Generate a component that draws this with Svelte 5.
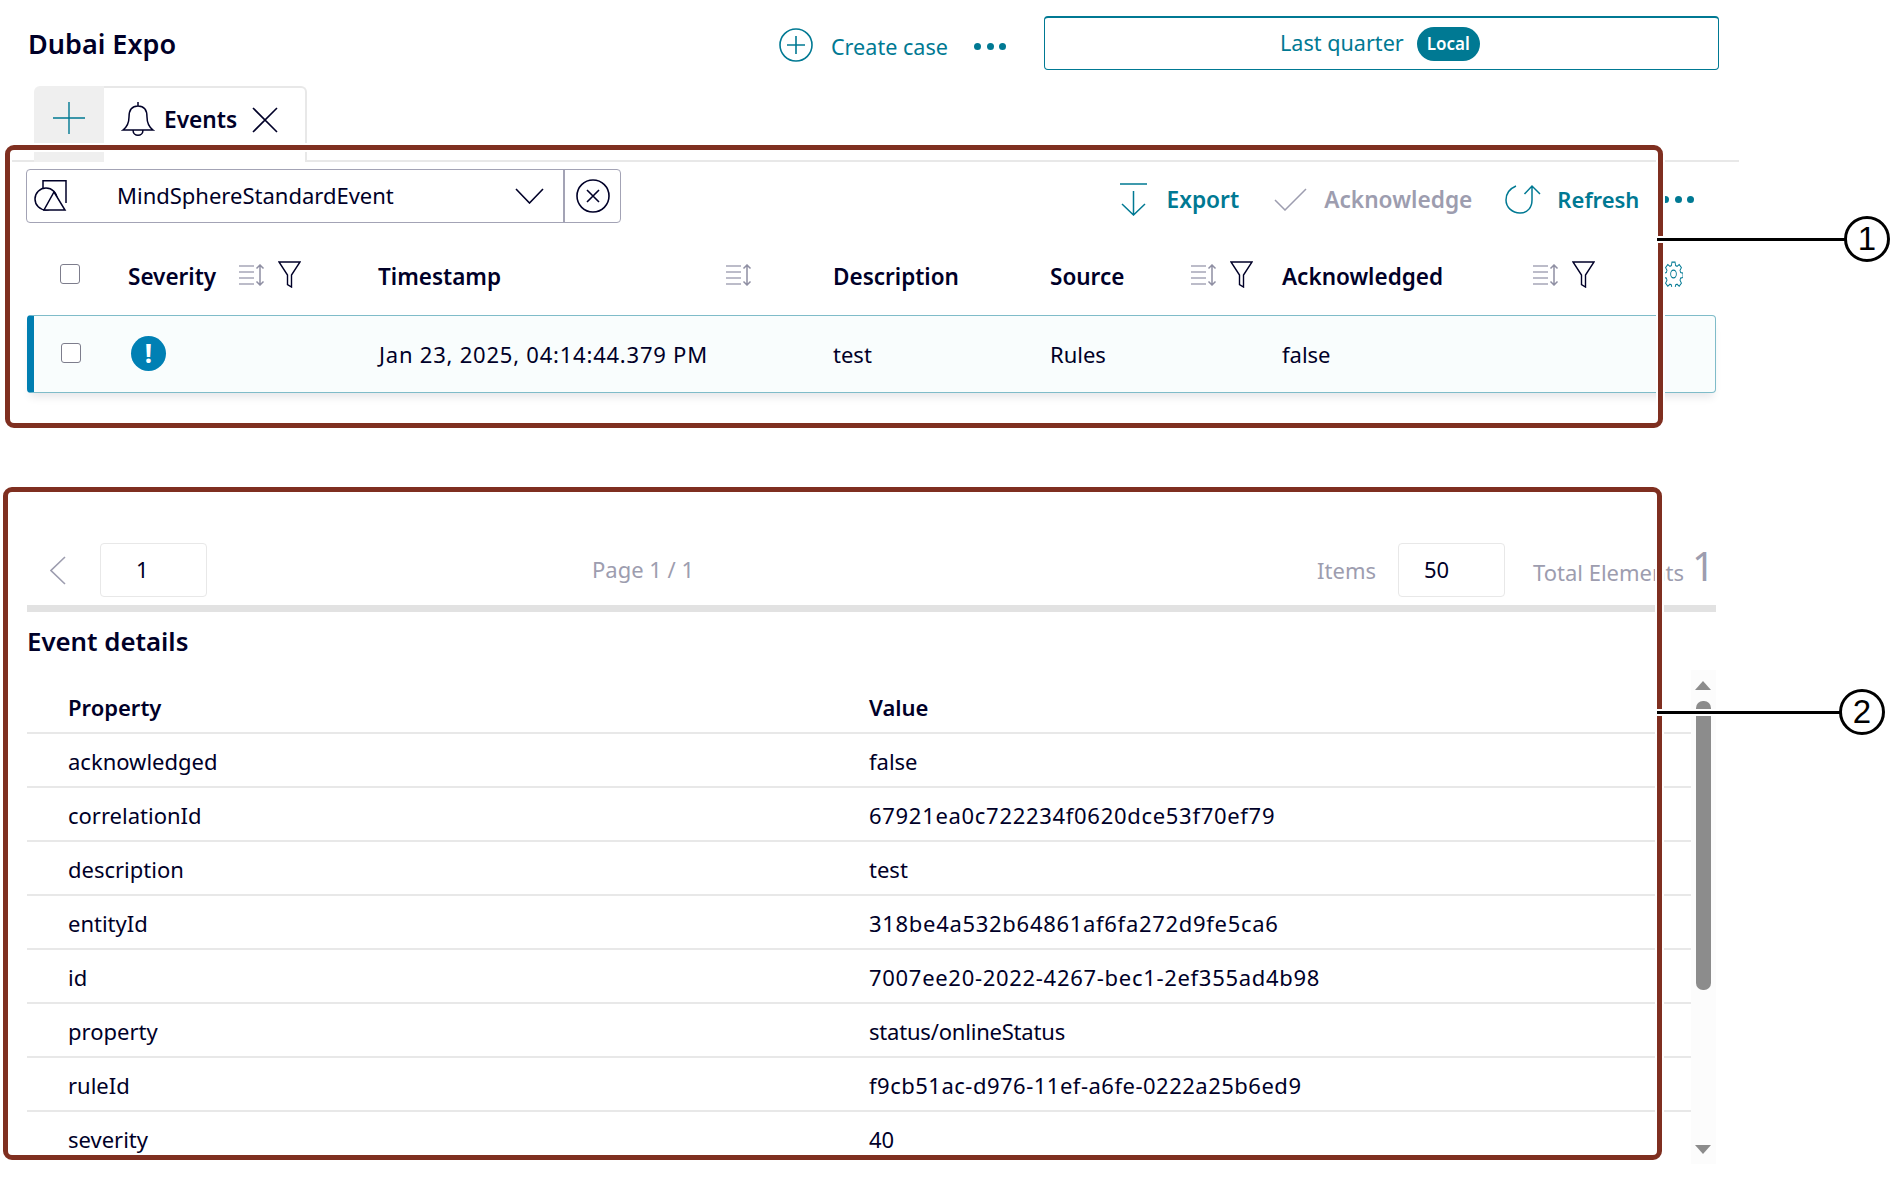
<script>
  const columns = [
    { label: 'Severity', cls: 'c-sev', filter: true },
    { label: 'Timestamp', cls: 'c-time', filter: false },
    { label: 'Description', cls: 'c-desc', noSort: true },
    { label: 'Source', cls: 'c-src', filter: true },
    { label: 'Acknowledged', cls: 'c-ack', filter: true }
  ];

  const details = [
    ['acknowledged', 'false'],
    ['correlationId', '67921ea0c722234f0620dce53f70ef79', 'hex'],
    ['description', 'test'],
    ['entityId', '318be4a532b64861af6fa272d9fe5ca6', 'hex'],
    ['id', '7007ee20-2022-4267-bec1-2ef355ad4b98', 'hex'],
    ['property', 'status/onlineStatus', 'tight'],
    ['ruleId', 'f9cb51ac-d976-11ef-a6fe-0222a25b6ed9', 'hex-narrow'],
    ['severity', '40']
  ];
</script>

{#snippet sortIcon()}
  <svg class="ic-sort" viewBox="0 0 27 22" fill="none" stroke="#a6a6b8" stroke-width="1.5">
    <path d="M0 2h15M0 8h15M0 14h15M0 20h15" />
    <path d="M21 1v20M17.5 4.5 21 1l3.5 3.5M17.5 17.5 21 21l3.5-3.5" stroke="#8f8fa3" />
  </svg>
{/snippet}

{#snippet funnelIcon()}
  <svg class="ic-funnel" viewBox="0 0 23 27" fill="none" stroke="#000028" stroke-width="1.4">
    <path d="M1 1h21l-8.5 13v12l-4-2.5V14z" />
  </svg>
{/snippet}

<div class="page">
  <header class="top">
    <h1 class="title">Dubai Expo</h1>
    <div class="create">
      <svg class="ic-add" viewBox="0 0 34 34" fill="none" stroke="#007993" stroke-width="1.6">
        <circle cx="17" cy="17" r="16" />
        <path d="M17 8v18M8 17h18" />
      </svg>
      <span>Create case</span>
    </div>
    <div class="dots d-top"><i></i><i></i><i></i></div>
    <button class="range">
      <span class="range-text">Last quarter</span>
      <span class="badge">Local</span>
    </button>
  </header>

  <nav class="tabs">
    <div class="tab-add">
      <svg viewBox="0 0 32 32" fill="none" stroke="#007993" stroke-width="1.4">
        <path d="M16 0v32M0 16h32" />
      </svg>
    </div>
    <div class="tab">
      <svg class="ic-bell" viewBox="0 0 34 36" fill="none" stroke="#000028" stroke-width="1.5">
        <path d="M17 5c-6 0-9 4.500-9 11 0 7-2 10-6 13h30c-4-3-6-6-6-13 0-6.500-3-11-9-11zM17 5V1M12 29c0 7 10 7 10 0" />
      </svg>
      <span>Events</span>
      <svg class="ic-x" viewBox="0 0 26 26" fill="none" stroke="#000028" stroke-width="1.6">
        <path d="M1 1l24 24M25 1 1 25" />
      </svg>
    </div>
  </nav>

  <div class="toolbar">
    <div class="select">
      <div class="select-main">
        <svg class="ic-shapes" viewBox="0 0 33 31" fill="none" stroke="#000028" stroke-width="1.5">
          <path d="M9 8V.8h23V23" stroke="#000028" />
          <circle cx="12" cy="19" r="11" />
          <path d="M10 30h21L20 12z" fill="#fff" />
        </svg>
        <span class="select-text">MindSphereStandardEvent</span>
        <svg class="ic-chev" viewBox="0 0 29 16" fill="none" stroke="#000028" stroke-width="1.6">
          <path d="M1 1l13.500 14L28 1" />
        </svg>
      </div>
      <div class="select-clear">
        <svg viewBox="0 0 34 34" fill="none" stroke="#000028" stroke-width="1.6">
          <circle cx="17" cy="17" r="16" />
          <path d="M11 11l12 12M23 11 11 23" />
        </svg>
      </div>
    </div>
    <div class="actions">
      <div class="action act-export">
        <svg class="ic-export" viewBox="0 0 27 33" fill="none" stroke="#007993" stroke-width="1.5">
          <path d="M0 1h27M13.500 8v24M2 21l11.500 11L25 21" />
        </svg>
        <span>Export</span>
      </div>
      <div class="action act-off">
        <svg class="ic-check" viewBox="0 0 33 23" fill="none" stroke="#9d9daf" stroke-width="1.5">
          <path d="M1 12l10 10L32 1" />
        </svg>
        <span>Acknowledge</span>
      </div>
      <div class="action act-refresh">
        <svg class="ic-refresh" viewBox="0 0 37 30" fill="none" stroke="#007993" stroke-width="1.5">
          <path d="M11 2C4 5 1 10 1 16c0 7 6 13 14 13s12-6 12-13V2M19.500 10 27 2l8 8" />
        </svg>
        <span>Refresh</span>
      </div>
      <div class="dots d-bar"><i></i><i></i><i></i></div>
    </div>
  </div>

  <div class="grid-head">
    <span class="check chk-head"></span>
    {#each columns as col}
      <div class="col {col.cls}">
        <span class="col-label">{col.label}</span>
        {#if !col.noSort}
          <span class="col-icons">
            {@render sortIcon()}
            {#if col.filter}{@render funnelIcon()}{/if}
          </span>
        {/if}
      </div>
    {/each}
    <svg class="ic-gear" viewBox="0 0 24 24" preserveAspectRatio="none" fill="none" stroke="#007993" stroke-width="1.1">
      <circle cx="12" cy="12" r="3.600" />
      <path d="M10 1h4l.6 3.200 1.900.8 2.700-1.800 2.800 2.800-1.800 2.700.8 1.900 3 .6v4l-3 .6-.8 1.900 1.800 2.700-2.800 2.800-2.700-1.800-1.900.8-.6 3h-4l-.6-3-1.900-.8-2.700 1.800-2.800-2.800 1.800-2.700-.8-1.900-3-.6v-4l3-.6.8-1.900-1.800-2.700 2.800-2.800 2.700 1.800 1.900-.8z" />
    </svg>
  </div>

  <div class="grid-row">
    <span class="check chk-row"></span>
    <div class="col c-sev">
      <span class="alert">!</span>
    </div>
    <div class="col c-time stamp">Jan 23, 2025, 04:14:44.379 PM</div>
    <div class="col c-desc">test</div>
    <div class="col c-src">Rules</div>
    <div class="col c-ack">false</div>
  </div>

  <div class="pager">
    <svg class="ic-prev" viewBox="0 0 16 29" fill="none" stroke="#9d9daf" stroke-width="1.6">
      <path d="M15 1 1 14.500 15 28" />
    </svg>
    <div class="pg-input pg-first">1</div>
    <span class="pg-label pg-page">Page 1 / 1</span>
    <span class="pg-label pg-items">Items</span>
    <div class="pg-input pg-size">50</div>
    <span class="pg-label pg-total">Total Elements</span>
    <span class="pg-count">1</span>
  </div>

  <section class="details">
    <h2 class="details-title">Event details</h2>
    <div class="details-body">
      <div class="table">
        <div class="tr tr-head">
          <span class="td">Property</span>
          <span class="td">Value</span>
        </div>
        {#each details as [prop, value, kind]}
          <div class="tr">
            <span class="td">{prop}</span>
            <span class="td" class:hex={kind === 'hex'} class:hex-narrow={kind === 'hex-narrow'} class:tight={kind === 'tight'}>{value}</span>
          </div>
        {/each}
      </div>
      <div class="scrollbar">
        <span class="sb-up"></span>
        <span class="sb-thumb"></span>
        <span class="sb-down"></span>
      </div>
    </div>
  </section>

  <!-- callouts laid over the screenshot -->
  <div class="frame frame-1"></div>
  <div class="frame frame-2"></div>
  <div class="leader leader-1"></div>
  <div class="leader leader-2"></div>
  <div class="callout callout-1">1</div>
  <div class="callout callout-2">2</div>
</div>

<style>
  :global(body) {
    margin: 0;
    background: #fff;
  }
  .page {
    position: relative;
    width: 1892px;
    height: 1181px;
    overflow: hidden;
    background: #fff;
    color: #000028;
    font-family: "Noto Sans", sans-serif;
    font-size: 22px;
  }
  .hex {
    letter-spacing: 0.7px;
  }
  .hex-narrow {
    letter-spacing: 0.5px;
  }
  .tight {
    letter-spacing: -0.2px;
  }
  .stamp {
    letter-spacing: 0.78px;
  }

  /* top bar */
  .top {
    display: flex;
    align-items: center;
    height: 54px;
    padding: 16px 173px 0 28px;
  }
  .title {
    flex: 1;
    margin: 1px 0 0;
    font-size: 27px;
    font-weight: 600;
    line-height: 1;
  }
  .create {
    display: flex;
    align-items: center;
    gap: 18px;
    margin-top: 4px;
    color: #007993;
    font-size: 21.6px;
  }
  .create span {
    padding-top: 3px;
  }
  .ic-add {
    width: 34px;
    height: 34px;
  }
  .dots {
    display: flex;
    gap: 5.5px;
  }
  .dots i {
    width: 7px;
    height: 7px;
    border-radius: 50%;
    background: #007993;
  }
  .d-top {
    margin: 6px 38px 0 26px;
  }
  .range {
    display: flex;
    align-items: center;
    justify-content: flex-start;
    gap: 13px;
    box-sizing: border-box;
    width: 675px;
    height: 54px;
    padding: 0 0 0 235px;
    border: 1.5px solid #007993;
    border-top-width: 2px;
    border-radius: 4px;
    background: #fff;
    color: #007993;
    font: inherit;
    font-size: 21.6px;
  }
  .range-text {
    padding-bottom: 2px;
  }
  .badge {
    display: block;
    padding: 0 10px;
    height: 34px;
    line-height: 33px;
    border-radius: 17px;
    background: #007993;
    color: #fff;
    font-size: 17px;
    font-weight: 600;
  }

  /* tabs */
  .tabs {
    display: flex;
    box-sizing: border-box;
    width: 1729px;
    height: 76px;
    margin: 16px 0 0 10px;
    padding-left: 24px;
    border-bottom: 2px solid #e8e8e8;
  }
  .tab-add {
    display: flex;
    align-items: center;
    justify-content: center;
    width: 70px;
    height: 76px;
    padding-bottom: 12px;
    box-sizing: border-box;
    background: #efefef;
    border-top-left-radius: 6px;
  }
  .tab-add svg {
    width: 32px;
    height: 32px;
  }
  .tab {
    display: flex;
    align-items: flex-start;
    box-sizing: border-box;
    width: 203px;
    height: 76px;
    padding: 13px 0 0 17px;
    background: #fff;
    border-top: 2px solid #e8e8e8;
    border-right: 2px solid #e8e8e8;
    border-top-right-radius: 6px;
    font-size: 22.7px;
    font-weight: 600;
  }
  .ic-bell {
    width: 34px;
    height: 36px;
  }
  .tab span {
    margin: 3px 0 0 9px;
  }
  .ic-x {
    width: 26px;
    height: 26px;
    margin: 6px 0 0 15px;
  }

  /* toolbar */
  .toolbar {
    display: flex;
    align-items: flex-start;
    justify-content: space-between;
    padding: 7px 198px 0 26px;
    height: 81px;
    box-sizing: border-box;
  }
  .select {
    display: flex;
    box-sizing: border-box;
    width: 595px;
    height: 54px;
    border: 1px solid #a3a3b5;
    border-radius: 4px;
  }
  .select-main {
    display: flex;
    align-items: center;
    flex: 1;
    padding: 0 19px 0 7px;
    border-right: 2px solid #a3a3b5;
  }
  .ic-shapes {
    width: 33px;
    height: 31px;
    margin-top: -2px;
  }
  .select-text {
    flex: 1;
    margin-left: 50px;
    padding-bottom: 2px;
  }
  .ic-chev {
    width: 29px;
    height: 16px;
  }
  .select-clear {
    display: flex;
    align-items: center;
    justify-content: center;
    width: 55px;
  }
  .select-clear svg {
    width: 34px;
    height: 34px;
  }
  .actions {
    display: flex;
    align-items: center;
    height: 60px;
  }
  .action {
    display: flex;
    align-items: center;
    color: #007993;
    font-size: 22.7px;
    font-weight: 600;
  }
  .act-off {
    color: #9d9daf;
  }
  .act-refresh {
    font-size: 22px;
  }
  .ic-export {
    width: 27px;
    height: 33px;
    margin-right: 20px;
  }
  .ic-check {
    width: 33px;
    height: 23px;
    margin: 0 17px 0 35px;
  }
  .ic-refresh {
    width: 37px;
    height: 30px;
    margin: 0 15px 0 33px;
  }
  .d-bar {
    margin-left: 22.6px;
  }

  /* grid */
  .grid-head,
  .grid-row {
    display: grid;
    align-items: center;
    margin-left: 27px;
    width: 1689px;
    box-sizing: border-box;
  }
  .grid-head {
    position: relative;
    grid-template-columns: 101px 250px 455px 217px 232px 1fr;
    height: 72px;
    padding-bottom: 5px;
    font-size: 22.5px;
    font-weight: 600;
  }
  .grid-row {
    grid-template-columns: 94px 251px 454px 217px 232px 1fr;
    height: 78px;
    border: 1px solid #7fbcc9;
    border-left: 7px solid #007eb1;
    border-radius: 4px;
    background: #f9fdfd;
    box-shadow: 0 7px 9px -3px rgba(0, 0, 40, 0.1);
  }
  .check {
    display: block;
    box-sizing: border-box;
    width: 20px;
    height: 20px;
    border: 1.5px solid #7d7d8c;
    border-radius: 3px;
    background: #fff;
  }
  .chk-head {
    margin: -6px 0 0 33px;
  }
  .chk-row {
    margin: -3px 0 0 27px;
  }
  .col {
    display: flex;
    align-items: center;
    white-space: nowrap;
  }
  .col-label {
    width: 111px;
    flex: none;
  }
  .c-time .col-label {
    width: 348px;
  }
  .c-src .col-label {
    width: 141px;
  }
  .c-ack .col-label {
    width: 251px;
  }
  .col-icons {
    display: flex;
    align-items: center;
    gap: 12px;
    margin-top: -4px;
  }
  .ic-sort {
    width: 27px;
    height: 22px;
  }
  .ic-funnel {
    width: 23px;
    height: 27px;
    margin-top: -1px;
  }
  .ic-gear {
    position: absolute;
    left: 1637px;
    top: 18px;
    width: 19px;
    height: 26px;
  }
  .alert {
    display: block;
    width: 35px;
    height: 35px;
    margin: -2px 0 0 3px;
    border-radius: 50%;
    background: #0080b4;
    color: #fff;
    font-weight: 700;
    font-size: 26px;
    line-height: 34px;
    text-align: center;
  }

  /* pager */
  .pager {
    display: flex;
    align-items: center;
    box-sizing: border-box;
    height: 54px;
    margin-top: 150px;
    padding-left: 50px;
    color: #9d9daf;
  }
  .ic-prev {
    width: 16px;
    height: 29px;
  }
  .pg-input {
    box-sizing: border-box;
    width: 107px;
    height: 54px;
    border: 1.5px solid #e8e8e8;
    border-radius: 4px;
    color: #000028;
    line-height: 50px;
  }
  .pg-first {
    margin-left: 34px;
    padding-left: 35px;
  }
  .pg-page {
    margin: -2px 0 0 385px;
  }
  .pg-items {
    margin-left: 623px;
  }
  .pg-size {
    margin-left: 22px;
    padding-left: 25px;
  }
  .pg-total {
    margin-left: 28px;
    padding-top: 4px;
  }
  .pg-count {
    margin-left: 8px;
    font-size: 40px;
    line-height: 1;
    margin-top: -8px;
  }

  /* details */
  .details {
    margin: 8px 0 0 27px;
    width: 1689px;
    border-top: 7px solid #e2e2e2;
  }
  .details-title {
    margin: 11px 0 0;
    font-size: 25.8px;
    font-weight: 600;
    line-height: 36px;
  }
  .details-body {
    display: flex;
    margin-top: 11px;
  }
  .table {
    width: 1664px;
    height: 494px;
    overflow: hidden;
  }
  .tr {
    display: grid;
    grid-template-columns: 801px 1fr;
    box-sizing: border-box;
    height: 54px;
    padding: 12px 0 0 41px;
    border-bottom: 2px solid #e8e8e8;
  }
  .tr-head {
    height: 64px;
    padding-top: 22px;
    font-weight: 600;
  }
  .scrollbar {
    position: relative;
    width: 25px;
    height: 494px;
    background: #fcfcfc;
  }
  .sb-thumb {
    position: absolute;
    left: 5px;
    top: 31px;
    width: 15px;
    height: 289px;
    border-radius: 7px;
    background: #8c8c8c;
  }
  .sb-up,
  .sb-down {
    position: absolute;
    left: 4px;
    width: 0;
    height: 0;
    border-left: 8.500px solid transparent;
    border-right: 8.500px solid transparent;
  }
  .sb-up {
    top: 11px;
    border-bottom: 9px solid #8c8c8c;
  }
  .sb-down {
    bottom: 10px;
    border-top: 9px solid #8c8c8c;
  }

  /* callouts */
  .frame {
    position: absolute;
    box-sizing: border-box;
    border: 5px solid #7f2f20;
    border-radius: 9px;
    box-shadow: 0 0 0 2px #fff, inset 0 0 0 2px #fff;
  }
  .frame-1 {
    left: 5px;
    top: 145px;
    width: 1658px;
    height: 283px;
  }
  .frame-2 {
    left: 3px;
    top: 487px;
    width: 1659px;
    height: 673px;
  }
  .leader {
    position: absolute;
    left: 1657px;
    width: 190px;
    height: 3px;
    background: #000;
    box-shadow: 0 0 0 2px #fff;
  }
  .leader-1 {
    top: 238px;
  }
  .leader-2 {
    top: 711px;
  }
  .callout {
    position: absolute;
    box-sizing: border-box;
    width: 46px;
    height: 46px;
    border: 3px solid #000;
    border-radius: 50%;
    background: #fff;
    color: #000;
    font-family: "Liberation Sans", sans-serif;
    font-size: 33px;
    line-height: 40px;
    text-align: center;
  }
  .callout-1 {
    left: 1844px;
    top: 216px;
  }
  .callout-2 {
    left: 1839px;
    top: 689px;
  }
</style>
